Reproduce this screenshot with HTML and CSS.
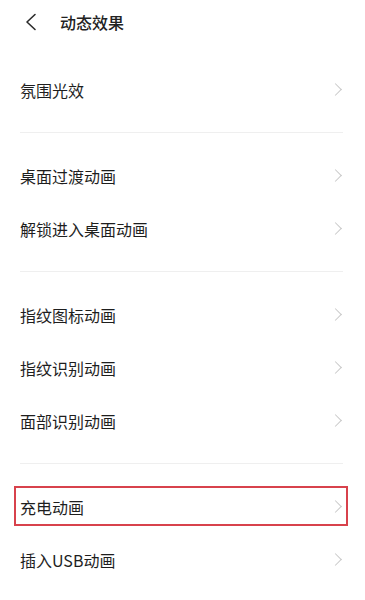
FILE: index.html
```html
<!DOCTYPE html>
<html lang="zh-CN">
<head>
    <meta charset="UTF-8">
    <meta name="viewport" content="width=device-width, initial-scale=1.0">
    <title>动态效果</title>
    <link rel="stylesheet" href="styles.css">
</head>
<body>
    <header class="topbar">
        <a class="back" href="#" aria-label="返回">
            <svg width="14" height="18" viewBox="0 0 14 18">
                <path d="M11 1.5 L3 9 L11 16.5" fill="none" stroke="#2b2b2b" stroke-width="1.6" stroke-linecap="round" stroke-linejoin="round"/>
            </svg>
        </a>
        <h1 class="title">动态效果</h1>
    </header>

    <main class="list">
        <ul class="group">
            <li class="row"><span>氛围光效</span><i class="arrow"></i></li>
        </ul>
        <hr class="divider">
        <ul class="group">
            <li class="row"><span>桌面过渡动画</span><i class="arrow"></i></li>
            <li class="row"><span>解锁进入桌面动画</span><i class="arrow"></i></li>
        </ul>
        <hr class="divider">
        <ul class="group">
            <li class="row"><span>指纹图标动画</span><i class="arrow"></i></li>
            <li class="row"><span>指纹识别动画</span><i class="arrow"></i></li>
            <li class="row"><span>面部识别动画</span><i class="arrow"></i></li>
        </ul>
        <hr class="divider">
        <ul class="group">
            <li class="row marked"><span>充电动画</span><i class="arrow"></i></li>
            <li class="row"><span>插入USB动画</span><i class="arrow"></i></li>
        </ul>
        <hr class="divider">
    </main>
</body>
</html>
```

FILE: styles.css
```css
/* Page basics */
body {
    margin: 0;
    background-color: #fff;
    color: #1e1e1e;
    font-family: "Noto Sans CJK SC", "Noto Sans", sans-serif;
}

/* Top bar with back arrow and title */
.topbar {
    height: 44px;
    display: flex;
    align-items: center;
    padding-left: 24px;
}

.back {
    display: flex;
    align-items: center;
    width: 36px;
}

.title {
    margin: 0;
    font-size: 16px;
    font-weight: 500;
    color: #222;
    line-height: 1;
}

/* Settings list */
.list {
    padding-top: 19px;
}

.group {
    list-style: none;
    margin: 0;
    padding: 0;
}

.row {
    position: relative;
    height: 53px;
    display: flex;
    align-items: center;
    justify-content: space-between;
    padding: 0 25px 0 20px;
    font-size: 16px;
}

.divider {
    border: none;
    height: 1px;
    background-color: #efefef;
    margin: 16px 22px 16px 20px;
}

/* Right chevron */
.arrow {
    width: 8px;
    height: 8px;
    border-top: 1.3px solid #c9c9c9;
    border-right: 1.3px solid #c9c9c9;
    transform: rotate(45deg);
}

/* Red annotation frame around the marked row */
.marked::after {
    content: "";
    position: absolute;
    top: 6px;
    bottom: 7px;
    left: 14px;
    right: 17px;
    border: 2px solid #d8424c;
}
```
